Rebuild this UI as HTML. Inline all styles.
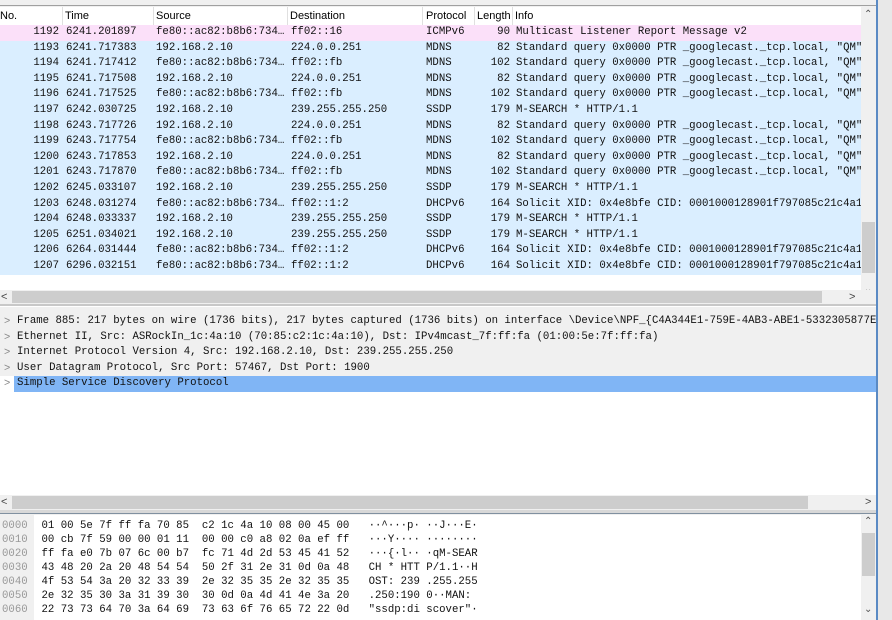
<!DOCTYPE html>
<html><head><meta charset="utf-8"><style>
*{margin:0;padding:0;box-sizing:border-box}
body{width:892px;height:620px;overflow:hidden;background:#f0f0f0;position:relative;font-family:"Liberation Mono",monospace;font-size:10.7px;color:#111}
.abs{position:absolute}
.hdr{font-family:"Liberation Sans",sans-serif;font-size:11px;color:#000}
.row{position:absolute;left:0;width:861px;height:15.6px;line-height:15.6px;white-space:pre}
.row span{position:absolute;top:0}
.c0{right:802px}.c1{left:66px}.c2{left:156px}.c3{left:291px}.c4{left:426px}.c5{right:351px}.c6{left:516px}
.d{position:absolute;left:0;width:876px;height:15.5px;line-height:15.5px;white-space:pre}
.d .t{position:absolute;left:17px}
.d .a{position:absolute;left:4px;color:#888;font-family:"Liberation Sans",sans-serif}
.h{position:absolute;left:0;height:14px;line-height:14px;white-space:pre}
</style></head><body>
<div class="abs" style="left:0;top:0;width:892px;height:6px;background:#f0f0f0;border-bottom:1px solid #a0a0a0"></div>
<div class="abs" style="left:878px;top:0;width:14px;height:620px;background:#e8e8e8"></div>
<div class="abs" style="left:876px;top:0;width:2px;height:620px;background:#5a8ac4"></div>
<!-- packet list -->
<div class="abs" style="left:0;top:7px;width:861px;height:283px;background:#fff"></div>
<div class="abs hdr" style="left:0;top:7px;width:861px;height:18px;line-height:18px;background:#fff">
<span class="abs" style="left:0">No.</span><span class="abs" style="left:65px">Time</span><span class="abs" style="left:156px">Source</span><span class="abs" style="left:290px">Destination</span><span class="abs" style="left:426px">Protocol</span><span class="abs" style="left:477px">Length</span><span class="abs" style="left:515px">Info</span>
<span class="abs" style="left:62px;top:0;width:1px;height:18px;background:#e0e0e0"></span><span class="abs" style="left:153px;width:1px;height:18px;background:#e0e0e0"></span><span class="abs" style="left:287px;width:1px;height:18px;background:#e0e0e0"></span><span class="abs" style="left:422px;width:1px;height:18px;background:#e0e0e0"></span><span class="abs" style="left:474px;width:1px;height:18px;background:#e0e0e0"></span><span class="abs" style="left:512px;width:1px;height:18px;background:#e0e0e0"></span>
</div>
<div class="abs" style="left:0;top:25px;width:861px;height:250px;overflow:hidden">
<div class="row" style="top:0;background:#fbe0f9"><span class="c0">1192</span><span class="c1">6241.201897</span><span class="c2">fe80::ac82:b8b6:734…</span><span class="c3">ff02::16</span><span class="c4">ICMPv6</span><span class="c5">90</span><span class="c6">Multicast Listener Report Message v2</span></div>
<div class="row" style="top:15.6px;background:#daeeff"><span class="c0">1193</span><span class="c1">6241.717383</span><span class="c2">192.168.2.10</span><span class="c3">224.0.0.251</span><span class="c4">MDNS</span><span class="c5">82</span><span class="c6">Standard query 0x0000 PTR _googlecast._tcp.local, "QM"</span></div>
<div class="row" style="top:31.2px;background:#daeeff"><span class="c0">1194</span><span class="c1">6241.717412</span><span class="c2">fe80::ac82:b8b6:734…</span><span class="c3">ff02::fb</span><span class="c4">MDNS</span><span class="c5">102</span><span class="c6">Standard query 0x0000 PTR _googlecast._tcp.local, "QM"</span></div>
<div class="row" style="top:46.8px;background:#daeeff"><span class="c0">1195</span><span class="c1">6241.717508</span><span class="c2">192.168.2.10</span><span class="c3">224.0.0.251</span><span class="c4">MDNS</span><span class="c5">82</span><span class="c6">Standard query 0x0000 PTR _googlecast._tcp.local, "QM"</span></div>
<div class="row" style="top:62.4px;background:#daeeff"><span class="c0">1196</span><span class="c1">6241.717525</span><span class="c2">fe80::ac82:b8b6:734…</span><span class="c3">ff02::fb</span><span class="c4">MDNS</span><span class="c5">102</span><span class="c6">Standard query 0x0000 PTR _googlecast._tcp.local, "QM"</span></div>
<div class="row" style="top:78px;background:#daeeff"><span class="c0">1197</span><span class="c1">6242.030725</span><span class="c2">192.168.2.10</span><span class="c3">239.255.255.250</span><span class="c4">SSDP</span><span class="c5">179</span><span class="c6">M-SEARCH * HTTP/1.1</span></div>
<div class="row" style="top:93.6px;background:#daeeff"><span class="c0">1198</span><span class="c1">6243.717726</span><span class="c2">192.168.2.10</span><span class="c3">224.0.0.251</span><span class="c4">MDNS</span><span class="c5">82</span><span class="c6">Standard query 0x0000 PTR _googlecast._tcp.local, "QM"</span></div>
<div class="row" style="top:109.2px;background:#daeeff"><span class="c0">1199</span><span class="c1">6243.717754</span><span class="c2">fe80::ac82:b8b6:734…</span><span class="c3">ff02::fb</span><span class="c4">MDNS</span><span class="c5">102</span><span class="c6">Standard query 0x0000 PTR _googlecast._tcp.local, "QM"</span></div>
<div class="row" style="top:124.8px;background:#daeeff"><span class="c0">1200</span><span class="c1">6243.717853</span><span class="c2">192.168.2.10</span><span class="c3">224.0.0.251</span><span class="c4">MDNS</span><span class="c5">82</span><span class="c6">Standard query 0x0000 PTR _googlecast._tcp.local, "QM"</span></div>
<div class="row" style="top:140.4px;background:#daeeff"><span class="c0">1201</span><span class="c1">6243.717870</span><span class="c2">fe80::ac82:b8b6:734…</span><span class="c3">ff02::fb</span><span class="c4">MDNS</span><span class="c5">102</span><span class="c6">Standard query 0x0000 PTR _googlecast._tcp.local, "QM"</span></div>
<div class="row" style="top:156px;background:#daeeff"><span class="c0">1202</span><span class="c1">6245.033107</span><span class="c2">192.168.2.10</span><span class="c3">239.255.255.250</span><span class="c4">SSDP</span><span class="c5">179</span><span class="c6">M-SEARCH * HTTP/1.1</span></div>
<div class="row" style="top:171.6px;background:#daeeff"><span class="c0">1203</span><span class="c1">6248.031274</span><span class="c2">fe80::ac82:b8b6:734…</span><span class="c3">ff02::1:2</span><span class="c4">DHCPv6</span><span class="c5">164</span><span class="c6">Solicit XID: 0x4e8bfe CID: 0001000128901f797085c21c4a1</span></div>
<div class="row" style="top:187.2px;background:#daeeff"><span class="c0">1204</span><span class="c1">6248.033337</span><span class="c2">192.168.2.10</span><span class="c3">239.255.255.250</span><span class="c4">SSDP</span><span class="c5">179</span><span class="c6">M-SEARCH * HTTP/1.1</span></div>
<div class="row" style="top:202.8px;background:#daeeff"><span class="c0">1205</span><span class="c1">6251.034021</span><span class="c2">192.168.2.10</span><span class="c3">239.255.255.250</span><span class="c4">SSDP</span><span class="c5">179</span><span class="c6">M-SEARCH * HTTP/1.1</span></div>
<div class="row" style="top:218.4px;background:#daeeff"><span class="c0">1206</span><span class="c1">6264.031444</span><span class="c2">fe80::ac82:b8b6:734…</span><span class="c3">ff02::1:2</span><span class="c4">DHCPv6</span><span class="c5">164</span><span class="c6">Solicit XID: 0x4e8bfe CID: 0001000128901f797085c21c4a1</span></div>
<div class="row" style="top:234px;background:#daeeff"><span class="c0">1207</span><span class="c1">6296.032151</span><span class="c2">fe80::ac82:b8b6:734…</span><span class="c3">ff02::1:2</span><span class="c4">DHCPv6</span><span class="c5">164</span><span class="c6">Solicit XID: 0x4e8bfe CID: 0001000128901f797085c21c4a1</span></div>
</div>
<!-- vscroll list -->
<div class="abs" style="left:861px;top:7px;width:15px;height:283px;background:#f0f0f0"></div>
<div class="abs hdr" style="left:864px;top:9px;font-size:10px;color:#555">&#8963;</div>
<div class="abs" style="left:862px;top:222px;width:13px;height:51px;background:#cdcdcd"></div>
<div class="abs hdr" style="left:864px;top:284px;font-size:10px;color:#555">&#8964;</div>
<!-- hscroll list -->
<div class="abs" style="left:0;top:290px;width:876px;height:14px;background:#f0f0f0"></div>
<div class="abs" style="left:12px;top:291px;width:810px;height:12px;background:#cdcdcd"></div>
<div class="abs hdr" style="left:1px;top:290px;font-size:11px;line-height:14px;color:#444">&lt;</div>
<div class="abs hdr" style="left:849px;top:290px;font-size:11px;line-height:14px;color:#444">&gt;</div>
<div class="abs" style="left:0;top:304px;width:876px;height:2px;background:#c8c8c8"></div>
<!-- details -->
<div class="abs" style="left:0;top:306px;width:876px;height:189px;background:#fff"></div>
<div class="abs" style="left:0;top:307px;width:876px;height:69px;background:#f0f0f0"></div>
<div class="d" style="top:314px"><span class="a">&gt;</span><span class="t">Frame 885: 217 bytes on wire (1736 bits), 217 bytes captured (1736 bits) on interface \Device\NPF_{C4A344E1-759E-4AB3-ABE1-5332305877E</span></div>
<div class="d" style="top:329.5px"><span class="a">&gt;</span><span class="t">Ethernet II, Src: ASRockIn_1c:4a:10 (70:85:c2:1c:4a:10), Dst: IPv4mcast_7f:ff:fa (01:00:5e:7f:ff:fa)</span></div>
<div class="d" style="top:345px"><span class="a">&gt;</span><span class="t">Internet Protocol Version 4, Src: 192.168.2.10, Dst: 239.255.255.250</span></div>
<div class="d" style="top:360.5px"><span class="a">&gt;</span><span class="t">User Datagram Protocol, Src Port: 57467, Dst Port: 1900</span></div>
<div class="d" style="top:376px"><span class="a">&gt;</span><span class="t" style="left:14px;right:0;padding-left:3px;background:#80b5f5">Simple Service Discovery Protocol</span></div>
<!-- hscroll details -->
<div class="abs" style="left:0;top:495px;width:876px;height:15px;background:#f0f0f0"></div>
<div class="abs" style="left:12px;top:496px;width:796px;height:13px;background:#cdcdcd"></div>
<div class="abs hdr" style="left:1px;top:495px;line-height:15px;color:#444">&lt;</div>
<div class="abs hdr" style="left:865px;top:495px;line-height:15px;color:#444">&gt;</div>
<div class="abs" style="left:0;top:510px;width:876px;height:4px;background:#d8d8d8;border-bottom:1px solid #8090a0"></div>
<!-- hex -->
<div class="abs" style="left:0;top:515px;width:876px;height:105px;background:#fff"></div>
<div class="abs" style="left:0;top:515px;width:34px;height:105px;background:#f0f0f0"></div>
<div class="abs" style="left:861px;top:515px;width:15px;height:105px;background:#f0f0f0"></div>
<div class="abs" style="left:862px;top:533px;width:13px;height:43px;background:#cdcdcd"></div>
<div class="abs hdr" style="left:864px;top:516px;font-size:10px;color:#555">&#8963;</div>
<div class="abs hdr" style="left:864px;top:604px;font-size:10px;color:#555">&#8964;</div>
<div class="abs" style="left:2px;top:519px">
<div class="h" style="top:0"><span style="color:#999">0000</span>  <span style="position:relative;left:1px">01 00 5e 7f ff fa 70 85  c2 1c 4a 10 08 00 45 00   ··^···p· ··J···E·</span></div>
<div class="h" style="top:14px"><span style="color:#999">0010</span>  <span style="position:relative;left:1px">00 cb 7f 59 00 00 01 11  00 00 c0 a8 02 0a ef ff   ···Y···· ········</span></div>
<div class="h" style="top:28px"><span style="color:#999">0020</span>  <span style="position:relative;left:1px">ff fa e0 7b 07 6c 00 b7  fc 71 4d 2d 53 45 41 52   ···{·l·· ·qM-SEAR</span></div>
<div class="h" style="top:42px"><span style="color:#999">0030</span>  <span style="position:relative;left:1px">43 48 20 2a 20 48 54 54  50 2f 31 2e 31 0d 0a 48   CH * HTT P/1.1··H</span></div>
<div class="h" style="top:56px"><span style="color:#999">0040</span>  <span style="position:relative;left:1px">4f 53 54 3a 20 32 33 39  2e 32 35 35 2e 32 35 35   OST: 239 .255.255</span></div>
<div class="h" style="top:70px"><span style="color:#999">0050</span>  <span style="position:relative;left:1px">2e 32 35 30 3a 31 39 30  30 0d 0a 4d 41 4e 3a 20   .250:190 0··MAN: </span></div>
<div class="h" style="top:84px"><span style="color:#999">0060</span>  <span style="position:relative;left:1px">22 73 73 64 70 3a 64 69  73 63 6f 76 65 72 22 0d   "ssdp:di scover"·</span></div>
</div>
</body></html>
